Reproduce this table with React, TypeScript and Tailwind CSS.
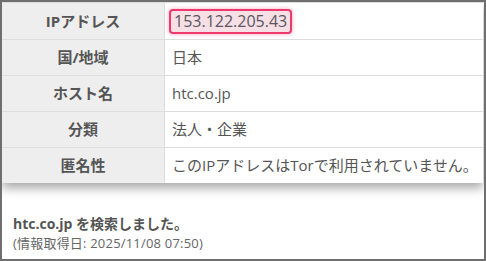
import React from "react";

const rows: { label: string; value: React.ReactNode }[] = [
  {
    label: "IPアドレス",
    value: (
      <span className="inline-block rounded-[4px] border-2 border-[#ec3a6e] bg-[#f6dfe5] px-[3px] leading-[21px] text-[16px] text-[#5a5560] shadow-[0_0_4px_rgba(236,58,110,0.45)]">
        153.122.205.43
      </span>
    ),
  },
  { label: "国/地域", value: "日本" },
  { label: "ホスト名", value: "htc.co.jp" },
  { label: "分類", value: "法人・企業" },
  { label: "匿名性", value: "このIPアドレスはTorで利用されていません。" },
];

export default function App() {
  return (
    <div
      className="w-[486px] h-[261px] overflow-hidden border-2 border-[#6f6f6f] bg-white flex flex-col"
      style={{ fontFamily: '"Open Sans", "Noto Sans CJK JP", sans-serif' }}
    >
      <div className="mr-[1px] bg-white shadow-[0_5px_10px_rgba(0,0,0,0.35)] border-t border-[#dddddd]">
        {rows.map((r, i) => (
          <div
            key={i}
            className={`grid grid-cols-[163px_1fr] h-[36px] ${i > 0 ? "border-t border-[#dddddd]" : ""}`}
          >
            <div className="bg-[#eeeeee] border-r border-[#dddddd] flex items-center justify-center font-bold text-[15px] text-[#555555]">
              {r.label}
            </div>
            <div className="flex items-center pl-[4px] text-[15px] text-[#555555]">
              {typeof r.value === "string" ? <span className="pl-[3px]">{r.value}</span> : r.value}
            </div>
          </div>
        ))}
      </div>
      <div className="mt-[31px] pl-[11px] flex flex-col">
        <div className="text-[14px] font-bold text-[#555555] leading-[20px]">htc.co.jp を検索しました。</div>
        <div className="text-[13px] text-[#666666] leading-[19px] tracking-[0.2px]">(情報取得日: 2025/11/08 07:50)</div>
      </div>
    </div>
  );
}
